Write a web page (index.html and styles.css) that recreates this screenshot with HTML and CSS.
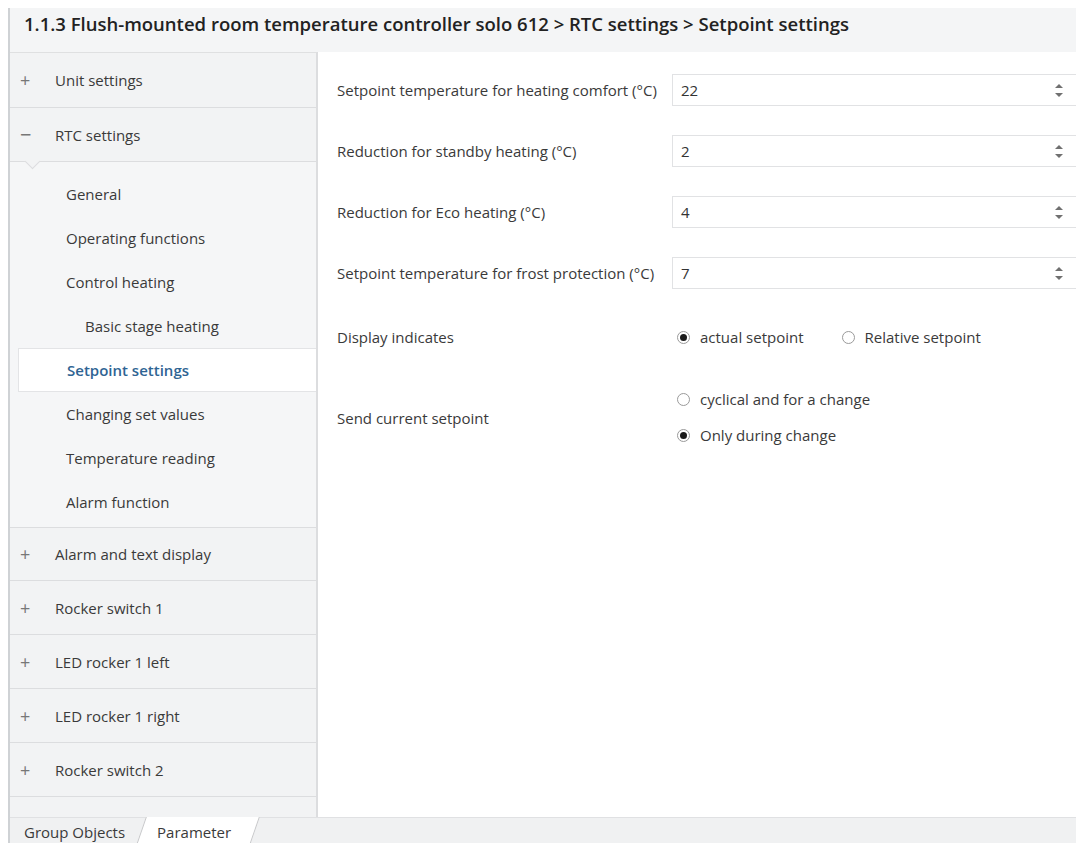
FILE: index.html
```html
<!DOCTYPE html>
<html lang="en">
<head>
<meta charset="utf-8">
<title>Setpoint settings</title>
<link rel="stylesheet" href="styles.css">
</head>
<body>
<div class="app">
  <header class="titlebar">
    <h1 class="title">1.1.3 Flush-mounted room temperature controller solo 612 &gt; RTC settings &gt; Setpoint settings</h1>
  </header>

  <div class="main">
    <nav class="sidebar">
      <div class="group"><span class="sign">+</span><span>Unit settings</span></div>
      <div class="group open"><span class="sign minus">−</span><span>RTC settings</span><i class="notch"></i></div>
      <div class="subs">
        <div class="sub">General</div>
        <div class="sub">Operating functions</div>
        <div class="sub">Control heating</div>
        <div class="sub deep">Basic stage heating</div>
        <div class="sub active">Setpoint settings</div>
        <div class="sub">Changing set values</div>
        <div class="sub">Temperature reading</div>
        <div class="sub">Alarm function</div>
      </div>
      <div class="group"><span class="sign">+</span><span>Alarm and text display</span></div>
      <div class="group"><span class="sign">+</span><span>Rocker switch 1</span></div>
      <div class="group"><span class="sign">+</span><span>LED rocker 1 left</span></div>
      <div class="group"><span class="sign">+</span><span>LED rocker 1 right</span></div>
      <div class="group"><span class="sign">+</span><span>Rocker switch 2</span></div>
      <div class="group"></div>
    </nav>

    <section class="content">
      <div class="field">
        <label class="label">Setpoint temperature for heating comfort (°C)</label>
        <div class="spin"><span class="val">22</span><span class="arrows"><i class="up"></i><i class="down"></i></span></div>
      </div>
      <div class="field">
        <label class="label">Reduction for standby heating (°C)</label>
        <div class="spin"><span class="val">2</span><span class="arrows"><i class="up"></i><i class="down"></i></span></div>
      </div>
      <div class="field">
        <label class="label">Reduction for Eco heating (°C)</label>
        <div class="spin"><span class="val">4</span><span class="arrows"><i class="up"></i><i class="down"></i></span></div>
      </div>
      <div class="field">
        <label class="label">Setpoint temperature for frost protection (°C)</label>
        <div class="spin"><span class="val">7</span><span class="arrows"><i class="up"></i><i class="down"></i></span></div>
      </div>
      <div class="field display">
        <label class="label">Display indicates</label>
        <div class="radios inline">
          <span class="radio checked"><i class="dot"></i>actual setpoint</span>
          <span class="radio"><i class="dot"></i>Relative setpoint</span>
        </div>
      </div>
      <div class="field send">
        <label class="label">Send current setpoint</label>
        <div class="radios stacked">
          <span class="radio"><i class="dot"></i>cyclical and for a change</span>
          <span class="radio checked"><i class="dot"></i>Only during change</span>
        </div>
      </div>
    </section>
  </div>

  <footer class="tabs">
    <span class="tab">Group Objects</span>
    <span class="tab current">Parameter</span>
  </footer>
</div>
</body>
</html>
```

FILE: styles.css
```css
* { box-sizing: border-box; }

html, body {
  margin: 0;
  padding: 0;
  background: #ffffff;
  overflow: hidden;
}

body {
  font-family: "Open Sans", "Noto Sans", "DejaVu Sans", sans-serif;
  font-size: 15px;
  color: #3a3a3a;
}

.app {
  margin: 8px 0 0 8px;
  height: 835px;
  border-left: 2px solid #cfd2d5;
  display: flex;
  flex-direction: column;
}

/* title strip */
.titlebar {
  height: 44px;
  flex: none;
  background: #f4f5f6;
  padding: 2px 0 0 14px;
}

.title {
  margin: 0;
  font-size: 18.5px;
  font-weight: 600;
  color: #222;
  line-height: 28px;
  white-space: nowrap;
}

.main {
  flex: 1;
  display: flex;
  min-height: 0;
  overflow: hidden;
}

/* navigation tree */
.sidebar {
  width: 308px;
  flex: none;
  background: #f2f3f4;
  border-top: 1px solid #dfe0e1;
  border-right: 2px solid #dcdddf;
  overflow: hidden;
}

.group {
  position: relative;
  height: 55px;
  display: flex;
  align-items: center;
  border-bottom: 1px solid #dcdddf;
  background: #f2f3f4;
}

.group ~ .group { height: 54px; }
.subs + .group { border-top: 1px solid #dcdddf; }

.sign {
  width: 45px;
  padding-left: 10px;
  color: #777;
  font-size: 18px;
  line-height: 1;
}

.sign.minus { font-size: 20px; }

.notch {
  position: absolute;
  left: 17px;
  bottom: -6px;
  width: 11px;
  height: 11px;
  background: #f2f3f4;
  border-right: 1px solid #dcdddf;
  border-bottom: 1px solid #dcdddf;
  transform: rotate(45deg);
}

.subs {
  background: #f5f6f7;
  padding: 10px 0 3px;
}

.sub {
  height: 44px;
  display: flex;
  align-items: center;
  padding-left: 56px;
}

.sub.deep { padding-left: 75px; }

.sub.active {
  position: relative;
  margin-left: 8px;
  margin-right: -2px;
  padding-left: 48px;
  background: #ffffff;
  border: 1px solid #e3e4e6;
  border-right: 0;
  color: #2f6493;
  font-weight: 600;
}

/* parameter form */
.content {
  flex: 1;
  background: #ffffff;
  padding: 22px 0 0 19px;
  overflow: hidden;
}

.field {
  display: grid;
  grid-template-columns: 335px 1fr;
  align-items: center;
  min-height: 32px;
  margin-bottom: 29px;
}

.field.display {
  margin-top: 32px;
  margin-bottom: 37px;
}

.label { color: #3a3a3a; white-space: nowrap; }

.spin {
  height: 32px;
  margin-right: -6px;
  border: 1px solid #e1e2e4;
  display: flex;
  align-items: center;
  justify-content: space-between;
  padding: 0 18px 0 8px;
  color: #333;
}

.arrows {
  display: flex;
  flex-direction: column;
  gap: 5px;
}

.arrows i {
  width: 0;
  height: 0;
  border-left: 4px solid transparent;
  border-right: 4px solid transparent;
}

.arrows .up { border-bottom: 4px solid #707070; }
.arrows .down { border-top: 4px solid #707070; }

.radios { padding-left: 5px; color: #3a3a3a; }

.radios.inline {
  display: flex;
  gap: 38px;
}

.radios.stacked {
  display: flex;
  flex-direction: column;
  gap: 17px;
}

.radio {
  display: inline-flex;
  align-items: center;
  line-height: 19px;
  white-space: nowrap;
}

.radio .dot {
  width: 13px;
  height: 13px;
  border: 1px solid #9a9a9a;
  border-radius: 50%;
  margin-right: 10px;
  display: inline-flex;
  align-items: center;
  justify-content: center;
  background: #fff;
}

.radio.checked .dot::after {
  content: "";
  width: 7px;
  height: 7px;
  border-radius: 50%;
  background: #1a1a1a;
}

/* bottom tab strip */
.tabs {
  height: 26px;
  flex: none;
  background: #f0f1f2;
  border-top: 1px solid #e0e1e3;
  display: flex;
  align-items: center;
  padding-left: 2px;
}

.tab {
  position: relative;
  padding: 2px 12px 0;
  line-height: 20px;
  color: #3a3a3a;
  white-space: nowrap;
}

.tab.current {
  z-index: 0;
  margin-left: 8px;
  padding: 2px 30px 0 12px;
}

.tab.current::before {
  content: "";
  position: absolute;
  top: -3px;
  bottom: -3px;
  left: -4px;
  right: 6px;
  background: #ffffff;
  border-left: 1px solid #c6c7c9;
  border-right: 1px solid #c6c7c9;
  transform: skewX(-19deg);
  z-index: -1;
}
```
